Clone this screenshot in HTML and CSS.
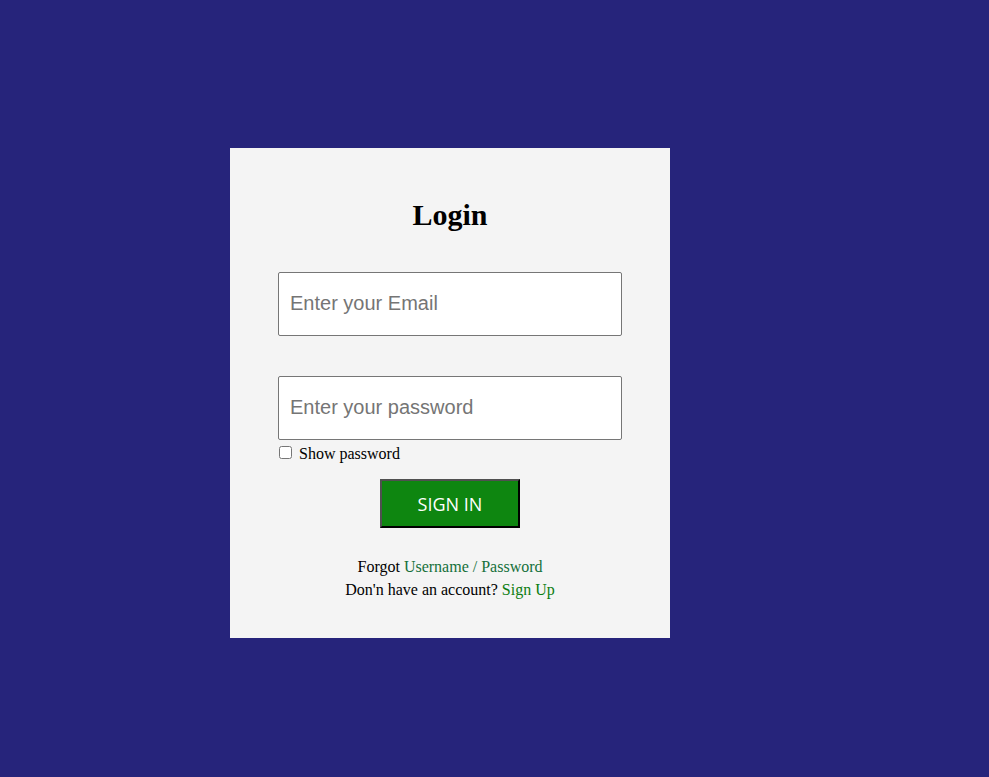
FILE: index.html
```html
<!DOCTYPE html>
<html lang="en">
<head>
<meta charset="utf-8">
<title>Login</title>
<link rel="stylesheet" href="styles.css">
</head>
<body>
<div class="page">
  <form class="card">
    <h2 class="title">Login</h2>
    <input class="field" type="email" placeholder="Enter your Email">
    <input class="field field-pass" type="password" placeholder="Enter your password">
    <label class="show"><input class="check" type="checkbox"> Show password</label>
    <div class="actions"><button class="btn" type="button">SIGN IN</button></div>
    <p class="links">Forgot <a class="link" href="#">Username / Password</a><br>Don'n have an account? <a class="link link-signup" href="#">Sign Up</a></p>
  </form>
</div>
</body>
</html>
```
FILE: styles.css
```css
html, body {
  margin: 0;
  padding: 0;
  height: 100%;
}
body {
  background: #26247b;
  font-family: "Liberation Serif", "Times New Roman", serif;
  font-size: 16px;
  color: #000;
}
.page {
  padding-top: 148px;
  padding-left: 230px;
}
.card {
  width: 440px;
  height: 490px;
  box-sizing: border-box;
  background: #f4f4f4;
  padding: 50px 48px 0 48px;
  display: flex;
  flex-direction: column;
}
.title {
  margin: 0;
  font-size: 30px;
  font-weight: bold;
  line-height: 33px;
  text-align: center;
}
.field {
  margin: 41px 0 0 0;
  width: 344px;
  height: 64px;
  box-sizing: border-box;
  border: 1px solid #767676;
  border-radius: 2px;
  background: #fff;
  padding: 0 11px 1px 11px;
  font-family: "Liberation Sans", Arial, sans-serif;
  font-size: 20px;
  color: #000;
  outline: none;
}
.field::placeholder {
  color: #757575;
}
.field-pass {
  margin-top: 40px;
}
.show {
  display: flex;
  align-items: center;
  margin-top: 5px;
  line-height: 18px;
  height: 18px;
}
.check {
  width: 13px;
  height: 13px;
  margin: 0 7px 3px 1px;
}
.actions {
  display: flex;
  justify-content: center;
  margin-top: 16px;
}
.btn {
  width: 140px;
  height: 49px;
  box-sizing: border-box;
  background: #0e8610;
  color: #fff;
  border-style: solid;
  border-width: 2px;
  border-color: #505050 #000 #000 #505050;
  font-family: "Open Sans", "Liberation Sans", sans-serif;
  font-size: 18px;
  padding: 0;
  cursor: pointer;
}
.links {
  margin: 27px 0 0 0;
  text-align: center;
  line-height: 23px;
}
.link {
  color: #15703a;
  text-decoration: none;
}
.link-signup {
  color: #0c7d10;
}
```
